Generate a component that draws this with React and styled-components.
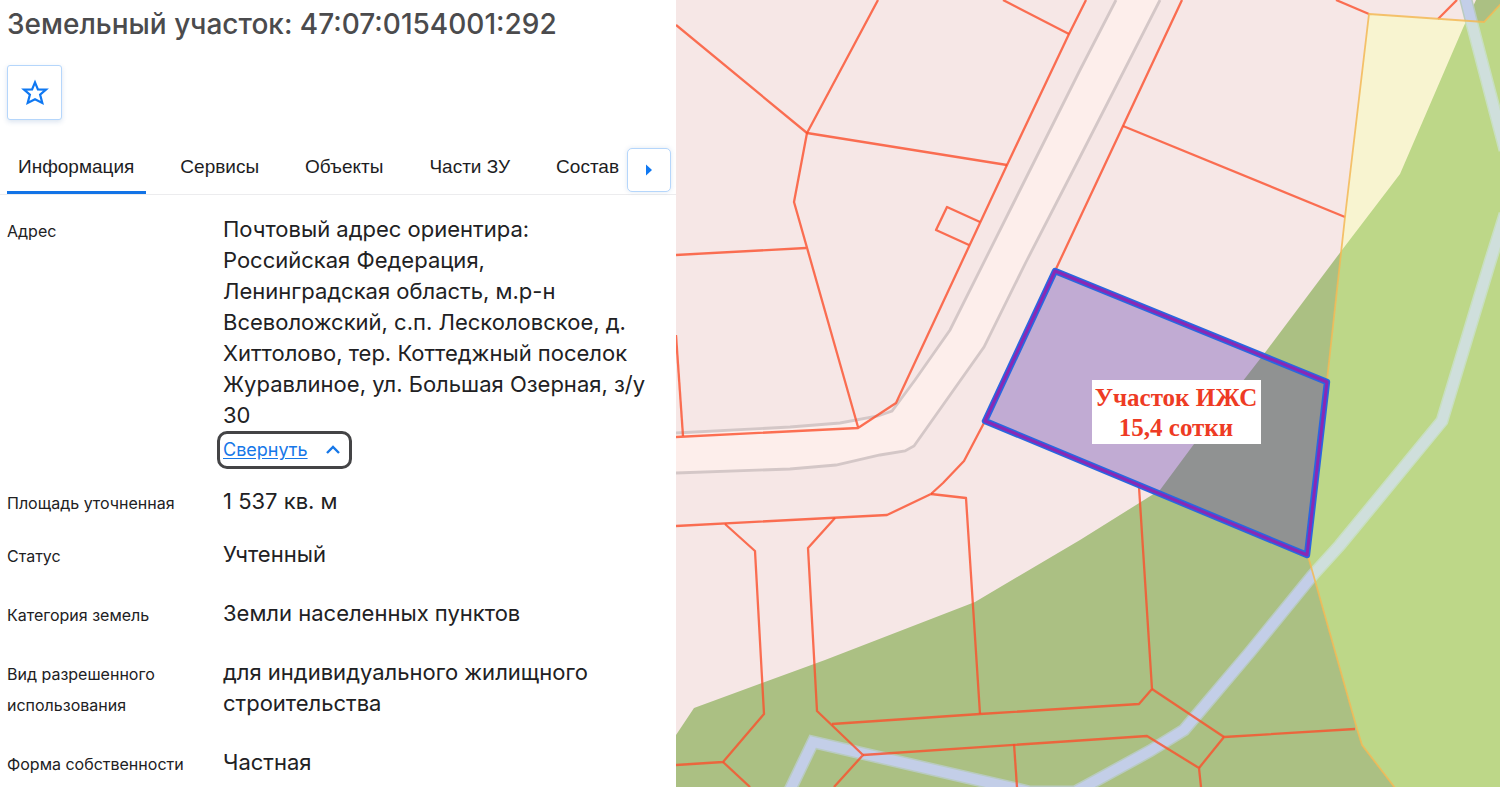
import { useState } from "react";
import styled, { createGlobalStyle } from "styled-components";

const GlobalStyle = createGlobalStyle`
    * {
    box-sizing: border-box;
    }

    body {
    margin: 0;
    background-color: white;
    color: #212123;
    font-family: Inter, "Liberation Sans", sans-serif;
    }
`

const Page = styled.div`
    display: grid;
    grid-template-columns: 676fr 824fr;
    min-height: 100vh;
`

const Panel = styled.main`
    display: flex;
    flex-direction: column;
    min-width: 0;
    padding-top: 4px;
`

const Title = styled.h1`
    margin: 0;
    padding-left: 7px;
    font-size: 28px;
    line-height: 40px;
    font-weight: 500;
    color: #4b4b4d;
`

const FavoriteButton = styled.button`
    display: flex;
    align-items: center;
    justify-content: center;
    width: 55px;
    height: 55px;
    margin: 21px 0 20px 7px;
    padding: 0;
    background-color: white;
    border: 1px solid #b5d6fb;
    border-radius: 3px;
    box-shadow: 0 2px 5px rgba(30, 90, 160, 0.16);
    cursor: pointer;
`

const TabBar = styled.div`
    display: flex;
    align-items: stretch;
    height: 55px;
    padding: 0 5px 0 7px;
    border-bottom: 1px solid #ececee;
`

const TabList = styled.div`
    display: flex;
    flex: 1;
    gap: 23px;
    min-width: 0;
    overflow: hidden;
`

const Tab = styled.button`
    flex: none;
    padding: 3px 12px 0 11px;
    background: none;
    border: none;
    border-bottom: 3px solid ${({ $active }) => ($active ? "#1273e6" : "transparent")};
    color: #1d1d1f;
    font-family: "Liberation Sans", Arial, sans-serif;
    font-size: 19px;
    line-height: 24px;
    cursor: pointer;
`

const ScrollButton = styled.button`
    display: flex;
    flex: none;
    align-items: center;
    justify-content: center;
    width: 44px;
    height: 44px;
    margin-top: 8px;
    padding: 0;
    background-color: white;
    border: 1px solid #b5d6fb;
    border-radius: 5px;
    box-shadow: 0 0 5px rgba(30, 90, 160, 0.14);
    cursor: pointer;
`

const Details = styled.dl`
    display: flex;
    flex-direction: column;
    margin: 0;
    padding: 19px 24px 0 7px;
`

const Row = styled.div`
    display: grid;
    grid-template-columns: 216px 1fr;
    align-items: baseline;
    margin-bottom: ${({ $space }) => $space || 26}px;

    &:last-child {
    margin-bottom: 0;
    }
`

const Term = styled.dt`
    font-size: 16px;
    line-height: 31px;
`

const Value = styled.dd`
    margin: 0;
    font-size: 22px;
    line-height: 31px;
`

const CollapseButton = styled.button`
    display: flex;
    align-items: center;
    gap: 17px;
    height: 38px;
    margin-left: -6px;
    padding: 0 8px 0 3px;
    background-color: white;
    border: 3px solid #444446;
    border-radius: 10px;
    color: #1677e8;
    font-family: inherit;
    font-size: 18px;
    line-height: 24px;
    text-decoration: underline;
    text-underline-offset: 2px;
    cursor: pointer;
`

const MapArea = styled.section`
    display: grid;
    min-width: 0;
    background-color: #f6e7e6;
`

const MapSvg = styled.svg`
    display: block;
    width: 100%;
    height: 100%;
    min-height: 0;
`

const MapText = styled.text`
    font-family: "Liberation Serif", "Times New Roman", serif;
    font-size: 25px;
    font-weight: bold;
    fill: #ee3b24;
    text-anchor: middle;
`

const tabs = ["Информация", "Сервисы", "Объекты", "Части ЗУ", "Состав"]

const address = "Почтовый адрес ориентира: Российская Федерация, Ленинградская область, м.р-н Всеволожский, с.п. Лесколовское, д. Хиттолово, тер. Коттеджный поселок Журавлиное, ул. Большая Озерная, з/у 30"

const details = [
    { term: "Площадь уточненная", value: "1 537 кв. м", space: 20 },
    { term: "Статус", value: "Учтенный" },
    { term: "Категория земель", value: "Земли населенных пунктов" },
    { term: "Вид разрешенного использования", value: "для индивидуального жилищного строительства" },
    { term: "Форма собственности", value: "Частная" },
]

const forest = "M1476 0H1510V797H676V735L694 708L825 660L975 602L1080 540L1160 490L1197 440L1267 350L1342 250L1400 174L1463 28Z"
const zone = "M1369 14L1484 22L1510 -6V797H1402L1362 745L1357 729L1308 556L1327 380L1345 217Z"
const streams = "M1465 -4L1471 20L1505 150M1505 214L1490 262L1442 421L1340 545L1312 576L1250 652L1184 730L1150 751L1075 792L1030 792L813 742L789 792"
const roadLeft = "1116,0 1080,70 1010,210 950,330 915,380 892,411 878,416 840,423 790,427 676,433"
const roadRight = "676,473 790,469 836,465 880,455 905,451 914,446 984,347 1026,262 1080,157 1160,0"

const borders = [
    "676,25 807,133 1007,165",
    "878,0 807,133 794,202 858,427",
    "676,255 806,248",
    "1003,0 1069,34",
    "1086,0 1069,34 1007,165 896,403 858,428 676,437",
    "980,222 947,207 936,230 969,245",
    "676,335 683,436",
    "1182,0 1123,126 1055,271",
    "1123,126 1345,217",
    "985,421 964,461 943,483 931,494 887,515 676,526",
    "931,494 966,498 980,714",
    "725,524 755,551 764,714 723,762 676,765",
    "723,762 750,787",
    "835,518 808,548 817,711 863,755 834,787",
    "832,724 980,714 1139,704 1152,689 1139,487",
    "863,755 1147,736 1199,768 1201,787",
    "1199,768 1224,737 1355,729",
    "1152,689 1224,737",
    "1014,744 1017,787",
    "1336,0 1369,14",
    "1457,0 1438,19",
]

const parcel = "1055,271 1327,382 1307,555 985,421"

const StarIcon = () => (
    <svg width="28" height="28" viewBox="0 0 28 28" aria-hidden="true">
        <path
            d="M14 3.4L16.9 10.4L25 10.6L19.1 15.6L21.3 24L14 20.2L6.7 24L8.9 15.6L3 10.6L11.1 10.4Z"
            fill="none"
            stroke="#0f78f2"
            strokeWidth="2.2"
        />
    </svg>
)

const ArrowIcon = () => (
    <svg width="12" height="12" viewBox="0 0 12 12" aria-hidden="true">
        <path d="M3 0.5L9 6L3 11.5Z" fill="#0f78f2" />
    </svg>
)

const ChevronIcon = () => (
    <svg width="16" height="12" viewBox="0 0 16 12" aria-hidden="true">
        <path d="M2 9L8 3L14 9" fill="none" stroke="#1677e8" strokeWidth="2.4" />
    </svg>
)

const CadastralMap = () => (
    <MapSvg viewBox="676 0 824 787" preserveAspectRatio="xMidYMid slice" role="img" aria-label="Карта участка">
        <defs>
            <clipPath id="zone">
                <path d={zone} />
            </clipPath>
        </defs>
        <rect x="676" width="824" height="787" fill="#f6e7e6" />
        <polygon points={`${roadLeft} ${roadRight}`} fill="#fdeeeb" />
        <polyline points={roadLeft} fill="none" stroke="#d4c7c7" strokeWidth="2.8" />
        <polyline points={roadRight} fill="none" stroke="#d4c7c7" strokeWidth="2.8" />
        <path d={forest} fill="#abc083" />
        <path d={streams} fill="none" stroke="#b9cbc0" strokeWidth="13" />
        <path d={streams} fill="none" stroke="#c3cee8" strokeWidth="10" />
        <g clipPath="url(#zone)">
            <path d={zone} fill="#f8f4d0" />
            <path d={forest} fill="#bdd788" />
            <path d={streams} fill="none" stroke="#c8dfc0" strokeWidth="13" />
            <path d={streams} fill="none" stroke="#cfdfdc" strokeWidth="10" />
        </g>
        <g fill="none" stroke="#fb4f2c" strokeOpacity="0.8" strokeWidth="2.3" strokeLinejoin="round">
            {borders.map((points) => (
                <polyline key={points} points={points} />
            ))}
        </g>
        <path d={zone} fill="none" stroke="#f3b955" strokeOpacity="0.85" strokeWidth="1.8" />
        <polygon points={parcel} fill="#5f3cb0" fillOpacity="0.35" />
        <polygon points={parcel} fill="none" stroke="#2a66e0" strokeWidth="6.4" strokeLinejoin="round" />
        <polygon points={parcel} fill="none" stroke="#8a28b4" strokeWidth="3" strokeLinejoin="round" />
        <rect x="1092" y="380" width="169" height="64" fill="white" />
        <MapText x="1176" y="406">Участок ИЖС</MapText>
        <MapText x="1176" y="436">15,4 сотки</MapText>
    </MapSvg>
)

const App = () => {
    const [activeTab, setActiveTab] = useState(tabs[0])
    const [expanded, setExpanded] = useState(true)

    return (
        <Page>
            <GlobalStyle />
            <Panel>
                <Title>Земельный участок: 47:07:0154001:292</Title>
                <FavoriteButton type="button" aria-label="В избранное">
                    <StarIcon />
                </FavoriteButton>
                <TabBar>
                    <TabList role="tablist">
                        {tabs.map((tab) => (
                            <Tab
                                key={tab}
                                type="button"
                                role="tab"
                                aria-selected={tab === activeTab}
                                $active={tab === activeTab}
                                onClick={() => setActiveTab(tab)}
                            >
                                {tab}
                            </Tab>
                        ))}
                    </TabList>
                    <ScrollButton type="button" aria-label="Далее">
                        <ArrowIcon />
                    </ScrollButton>
                </TabBar>
                <Details>
                    <Row $space={17}>
                        <Term>Адрес</Term>
                        <Value>
                            {expanded ? address : "Почтовый адрес ориентира"}
                            <CollapseButton type="button" aria-expanded={expanded} onClick={() => setExpanded(!expanded)}>
                                {expanded ? "Свернуть" : "Развернуть"}
                                <ChevronIcon />
                            </CollapseButton>
                        </Value>
                    </Row>
                    {details.map(({ term, value, space }) => (
                        <Row key={term} $space={space}>
                            <Term>{term}</Term>
                            <Value>{value}</Value>
                        </Row>
                    ))}
                </Details>
            </Panel>
            <MapArea>
                <CadastralMap />
            </MapArea>
        </Page>
    )
}

export default App;
